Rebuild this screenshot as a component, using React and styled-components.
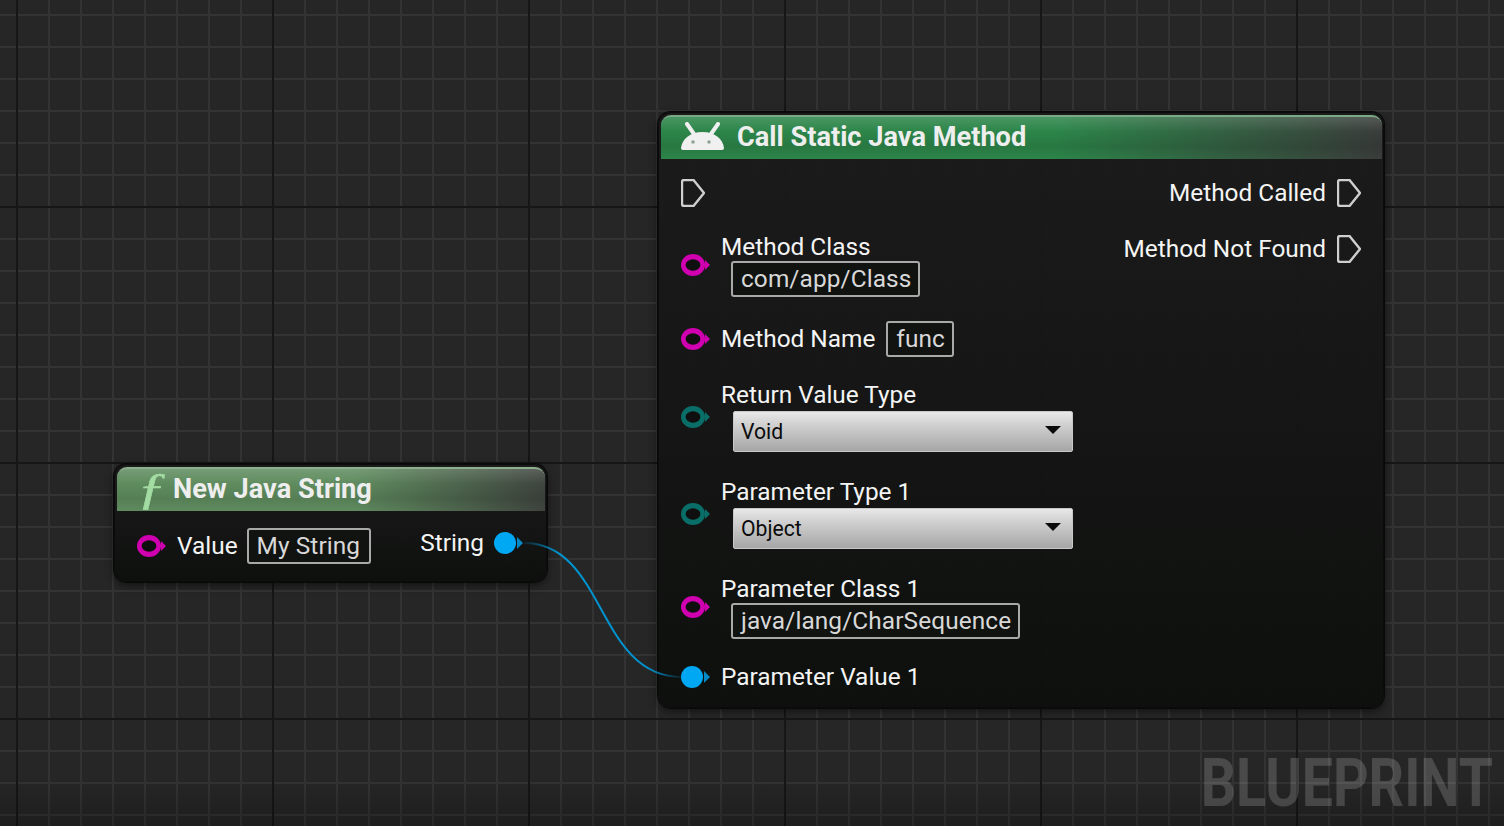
import styled, { createGlobalStyle } from 'styled-components'

const GlobalStyle = createGlobalStyle`
  html, body { margin: 0; padding: 0; background: #262626; }
  * { box-sizing: border-box; }
`

const Canvas = styled.div`
  position: relative;
  width: 1504px;
  height: 826px;
  overflow: hidden;
  font-family: Roboto, "Liberation Sans", sans-serif;
  background-color: #262626;
  background-image:
    linear-gradient(to bottom, rgba(0,0,0,0) 94%, rgba(0,0,0,.22) 100%),
    linear-gradient(#161616 2px, transparent 2px),
    linear-gradient(90deg, #161616 2px, transparent 2px),
    linear-gradient(#333 2px, transparent 2px),
    linear-gradient(90deg, #333 2px, transparent 2px);
  background-size: 100% 100%, 256px 256px, 256px 256px, 32px 32px, 32px 32px;
  background-position: 0 0, 0 206px, 16px 0, 0 14px, 16px 0;
`

const Wire = styled.svg`
  position: absolute;
  inset: 0;
  z-index: 2;
  pointer-events: none;
`

const Node = styled.div`
  position: absolute;
  left: ${p => p.$x}px;
  top: ${p => p.$y}px;
  width: ${p => p.$w}px;
  height: ${p => p.$h}px;
  padding: 3px;
  border-radius: 13px;
  background: linear-gradient(to bottom, rgba(27,27,27,.96), rgba(13,15,13,.97));
  border: 1px solid #0b0b0b;
  box-shadow: 0 0 0 1px #090909, 0 3px 8px rgba(0,0,0,.55);
  z-index: 1;
`

const Header = styled.div`
  display: flex;
  align-items: center;
  height: 44px;
  margin: -1px -2px 0 -1px;
  padding: 0 0 2px ${p => p.$pad}px;
  gap: ${p => p.$gap}px;
  border-radius: 10px 10px 0 0;
  border-top: 2px solid ${p => p.$edge};
  background:
    linear-gradient(to bottom, rgba(255,255,255,.14) 0%, rgba(255,255,255,0) 35%, rgba(0,0,0,.1) 70%, rgba(0,0,0,0) 100%),
    linear-gradient(90deg, ${p => p.$from} 0%, ${p => p.$from} 55%, ${p => p.$to} 100%);
`

const Title = styled.div`
  font-size: 27.2px;
  font-weight: 700;
  color: #eeeeee;
  white-space: nowrap;
`

const FuncGlyph = styled.span`
  display: block;
  width: 27px;
  font-family: "Liberation Serif", serif;
  font-style: italic;
  font-size: 44px;
  line-height: 40px;
  color: #a3dca3;
  -webkit-text-stroke: .5px #a3dca3;
  transform: scaleX(1.35);
  transform-origin: left center;
`

const Body = styled.div`
  display: flex;
  justify-content: space-between;
  align-items: flex-start;
  padding: ${p => p.$top}px ${p => p.$right || 19}px 0 19px;
`

const Column = styled.div`
  display: flex;
  flex-direction: column;
  gap: 24px;
  align-items: ${p => (p.$end ? 'flex-end' : 'flex-start')};
`

const Row = styled.div`
  display: flex;
  align-items: center;
  gap: ${p => p.$gap || 11}px;
  min-height: ${p => p.$h || 0}px;
  margin-top: ${p => p.$mt || 0}px;
`

const Stack = styled.div`
  display: flex;
  flex-direction: column;
  align-items: flex-start;
`

const Label = styled.span`
  font-size: 24.4px;
  line-height: 28px;
  color: #f4f4f4;
  white-space: nowrap;
`

const TextBox = styled.div`
  display: flex;
  align-items: center;
  height: 36px;
  min-width: ${p => p.$minw || 0}px;
  padding: 0 7px 2px 8px;
  margin-left: ${p => p.$shift || 0}px;
  font-size: 24.4px;
  letter-spacing: .1px;
  color: #d8d8d8;
  background: #111311;
  border: 2px solid #a9a9a9;
  border-radius: 3px;
  white-space: nowrap;
`

const Select = styled.div`
  display: flex;
  align-items: center;
  justify-content: space-between;
  width: 340px;
  height: 41px;
  margin: 2px 0 1px 12px;
  padding: 0 11px 0 7px;
  font-size: 21.2px;
  color: #0b0b0b;
  background: linear-gradient(to bottom, #e8e8e8 0%, #d2d2d2 30%, #a6a6a6 100%);
  border: 1px solid #c8c8c8;
  border-radius: 2px;
`

const Caret = styled.span`
  width: 0;
  height: 0;
  border-left: 8.5px solid transparent;
  border-right: 8.5px solid transparent;
  border-top: 8px solid #0a0a0a;
  margin-top: -3px;
`

const Watermark = styled.div`
  position: absolute;
  right: 11px;
  bottom: 8px;
  font-size: 66px;
  line-height: 68px;
  font-weight: 700;
  color: rgba(255,255,255,.17);
  transform: scaleX(.84);
  transform-origin: right center;
`

const PinSvg = styled.svg`
  flex: none;
  display: block;
`

const IconSvg = styled(PinSvg)`
  margin-top: -2px;
`

function DataPin({ color, filled }) {
  if (filled) {
    return (
      <PinSvg width="29" height="24" viewBox="0 0 29 24">
        <path d="M23 6 L29 12 L23 18 Z" fill={color} opacity="0.8" />
        <ellipse cx="11" cy="12" rx="11" ry="11" fill={color} />
      </PinSvg>
    )
  }
  return (
    <PinSvg width="29" height="24" viewBox="0 0 29 24">
      <path d="M24 7 L29 12 L24 17 Z" fill={color} />
      <ellipse cx="12" cy="12" rx="12" ry="11" fill={color} />
      <ellipse cx="12" cy="12" rx="7.4" ry="5.8" fill="#0e0f0e" />
    </PinSvg>
  )
}

function ExecPin() {
  return (
    <PinSvg width="24" height="28" viewBox="0 0 24 28">
      <path d="M3 1 H12.5 L23 14 L12.5 27 H3 Q1 27 1 25 V3 Q1 1 3 1 Z" fill="none" stroke="#cfcfcf" strokeWidth="2.4" strokeLinejoin="round" />
    </PinSvg>
  )
}

function AndroidIcon() {
  return (
    <IconSvg width="43" height="28" viewBox="0 0 43 28">
      <path d="M6 2 L13 12 M37 2 L30 12" stroke="#f0f0f0" strokeWidth="4" strokeLinecap="round" fill="none" />
      <path d="M0 26 C1 17 9 10 21.5 10 C34 10 42 17 43 26 Q43 28 41 28 H2 Q0 28 0 26 Z" fill="#f0f0f0" />
      <circle cx="12" cy="20" r="1.8" fill="#8fa395" />
      <circle cx="28" cy="20" r="1.8" fill="#8fa395" />
    </IconSvg>
  )
}

const MAGENTA = '#d000b0'
const TEAL = '#0a6e68'
const BLUE = '#00a7f2'

export default function App() {
  return (
    <Canvas>
      <GlobalStyle />

      <Node $x={114} $y={464} $w={433} $h={118}>
        <Header $pad={20} $gap={9} $edge="#8fb08f" $from="#5f8c5f" $to="#3f453f">
          <FuncGlyph>ƒ</FuncGlyph>
          <Title>New Java String</Title>
        </Header>
        <Body $top={15} $right={20}>
          <Row $h={40}>
            <DataPin color={MAGENTA} />
            <Label>Value</Label>
            <TextBox $minw={124} $shift={-2}>My String</TextBox>
          </Row>
          <Row $h={34} $gap={10}>
            <Label>String</Label>
            <DataPin color={BLUE} filled />
          </Row>
        </Body>
      </Node>

      <Node $x={658} $y={112} $w={726} $h={596}>
        <Header $pad={20} $gap={13} $edge="#79a985" $from="#2c8549" $to="#3a3d3b">
          <AndroidIcon />
          <Title>Call Static Java Method</Title>
        </Header>
        <Body $top={18}>
          <Column>
            <Row $h={32}><ExecPin /></Row>
            <Row $h={64}>
              <DataPin color={MAGENTA} />
              <Stack>
                <Label>Method Class</Label>
                <TextBox $shift={10}>com/app/Class</TextBox>
              </Stack>
            </Row>
            <Row $h={36}>
              <DataPin color={MAGENTA} />
              <Label>Method Name</Label>
              <TextBox>func</TextBox>
            </Row>
            <Row $h={72}>
              <DataPin color={TEAL} />
              <Stack>
                <Label>Return Value Type</Label>
                <Select>Void<Caret /></Select>
              </Stack>
            </Row>
            <Row $h={72} $mt={1}>
              <DataPin color={TEAL} />
              <Stack>
                <Label>Parameter Type 1</Label>
                <Select>Object<Caret /></Select>
              </Stack>
            </Row>
            <Row $h={64} $mt={1}>
              <DataPin color={MAGENTA} />
              <Stack>
                <Label>Parameter Class 1</Label>
                <TextBox $shift={10}>java/lang/CharSequence</TextBox>
              </Stack>
            </Row>
            <Row $h={28}>
              <DataPin color={BLUE} filled />
              <Label>Parameter Value 1</Label>
            </Row>
          </Column>
          <Column $end>
            <Row $h={32}><Label>Method Called</Label><ExecPin /></Row>
            <Row $h={32}><Label>Method Not Found</Label><ExecPin /></Row>
          </Column>
        </Body>
      </Node>

      <Wire width="1504" height="826" viewBox="0 0 1504 826">
        <defs>
          <linearGradient id="wireFade" gradientUnits="userSpaceOnUse" x1="524" y1="0" x2="682" y2="0">
            <stop offset="0" stopColor="#0093d0" stopOpacity=".1" />
            <stop offset=".22" stopColor="#0093d0" stopOpacity="1" />
            <stop offset=".78" stopColor="#0093d0" stopOpacity="1" />
            <stop offset="1" stopColor="#0093d0" stopOpacity=".1" />
          </linearGradient>
        </defs>
        <path d="M524 543 C606 543 596 677 682 677" fill="none" stroke="url(#wireFade)" strokeWidth="2" />
      </Wire>

      <Watermark>BLUEPRINT</Watermark>
    </Canvas>
  )
}
